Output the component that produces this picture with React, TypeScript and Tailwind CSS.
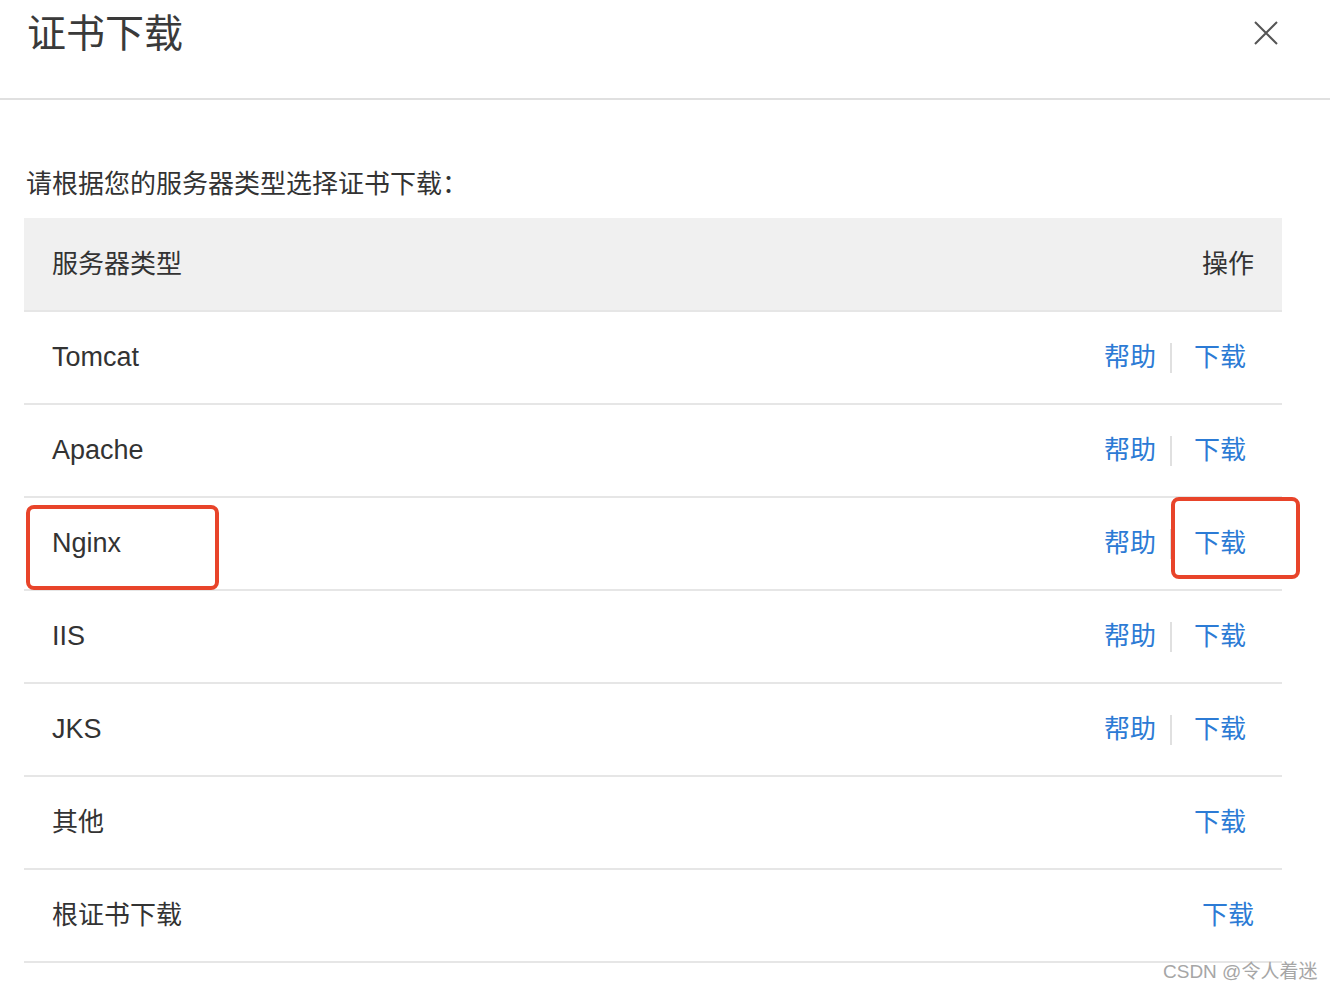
import React from 'react';

type Row = { name: string; help: boolean; latin?: boolean; last?: boolean };

const rows: Row[] = [
    { name: 'Tomcat', help: true, latin: true },
    { name: 'Apache', help: true, latin: true },
    { name: 'Nginx', help: true, latin: true },
    { name: 'IIS', help: true, latin: true },
    { name: 'JKS', help: true, latin: true },
    { name: '其他', help: false },
    { name: '根证书下载', help: false, last: true },
];

const font = { fontFamily: '"Liberation Sans", "Noto Sans CJK SC", sans-serif' };

const App = () => {
    return (
        <div className="relative w-[1330px] h-[990px] bg-white text-[#333] overflow-hidden" style={font}>
            {/* Header */}
            <div className="h-[100px] border-b-2 border-[#e0e0e0] flex items-start justify-between">
                <h1 className="pl-[27px] text-[39px] leading-[68px] text-[#3a3a3a] font-normal">证书下载</h1>
                <button className="mr-[52px] mt-[21px] w-[24px] h-[24px] text-[#555]">
                    <svg viewBox="0 0 24 24" width="24" height="24" fill="none" stroke="currentColor" strokeWidth="2">
                        <path d="M1 1L23 23M23 1L1 23" />
                    </svg>
                </button>
            </div>

            {/* Body */}
            <div className="pt-[67px]">
                <p className="pl-[26px] text-[26px] leading-[34px]">请根据您的服务器类型选择证书下载：</p>

                <div className="mt-[17px] mx-[24px] w-[1258px]">
                    <div className="h-[94px] bg-[#f0f0f0] border-b-2 border-[#e6e6e6] flex items-center justify-between px-[28px] text-[26px]">
                        <span>服务器类型</span>
                        <span>操作</span>
                    </div>
                    {rows.map(row => (
                        <div
                            key={row.name}
                            className="h-[93px] border-b-2 border-[#e6e6e6] flex items-center justify-between pl-[28px] text-[26px]"
                        >
                            <span className={row.latin ? 'text-[27px]' : ''}>{row.name}</span>
                            <div className={`flex items-center text-[#2c7bd5] ${row.last ? 'pr-[28px]' : 'pr-[36px]'}`}>
                                {row.help && (
                                    <>
                                        <span>帮助</span>
                                        <span className="ml-[14px] mr-[22px] w-[2px] h-[30px] bg-[#e0e0e0]" />
                                    </>
                                )}
                                <span>下载</span>
                            </div>
                        </div>
                    ))}
                </div>
            </div>

            {/* Annotation boxes */}
            <div className="absolute left-[26px] top-[505px] w-[193px] h-[85px] border-[4px] border-[#e8442a] rounded-[8px]" />
            <div className="absolute left-[1171px] top-[497px] w-[129px] h-[82px] border-[4px] border-[#e8442a] rounded-[8px]" />

            {/* Watermark */}
            <div className="absolute left-[1163px] top-[959px] text-[19px] leading-[26px] text-[#a6a6a6]" style={{ textShadow: '0 0 1px #fff' }}>
                CSDN @令人着迷
            </div>
        </div>
    );
};

export default App;
